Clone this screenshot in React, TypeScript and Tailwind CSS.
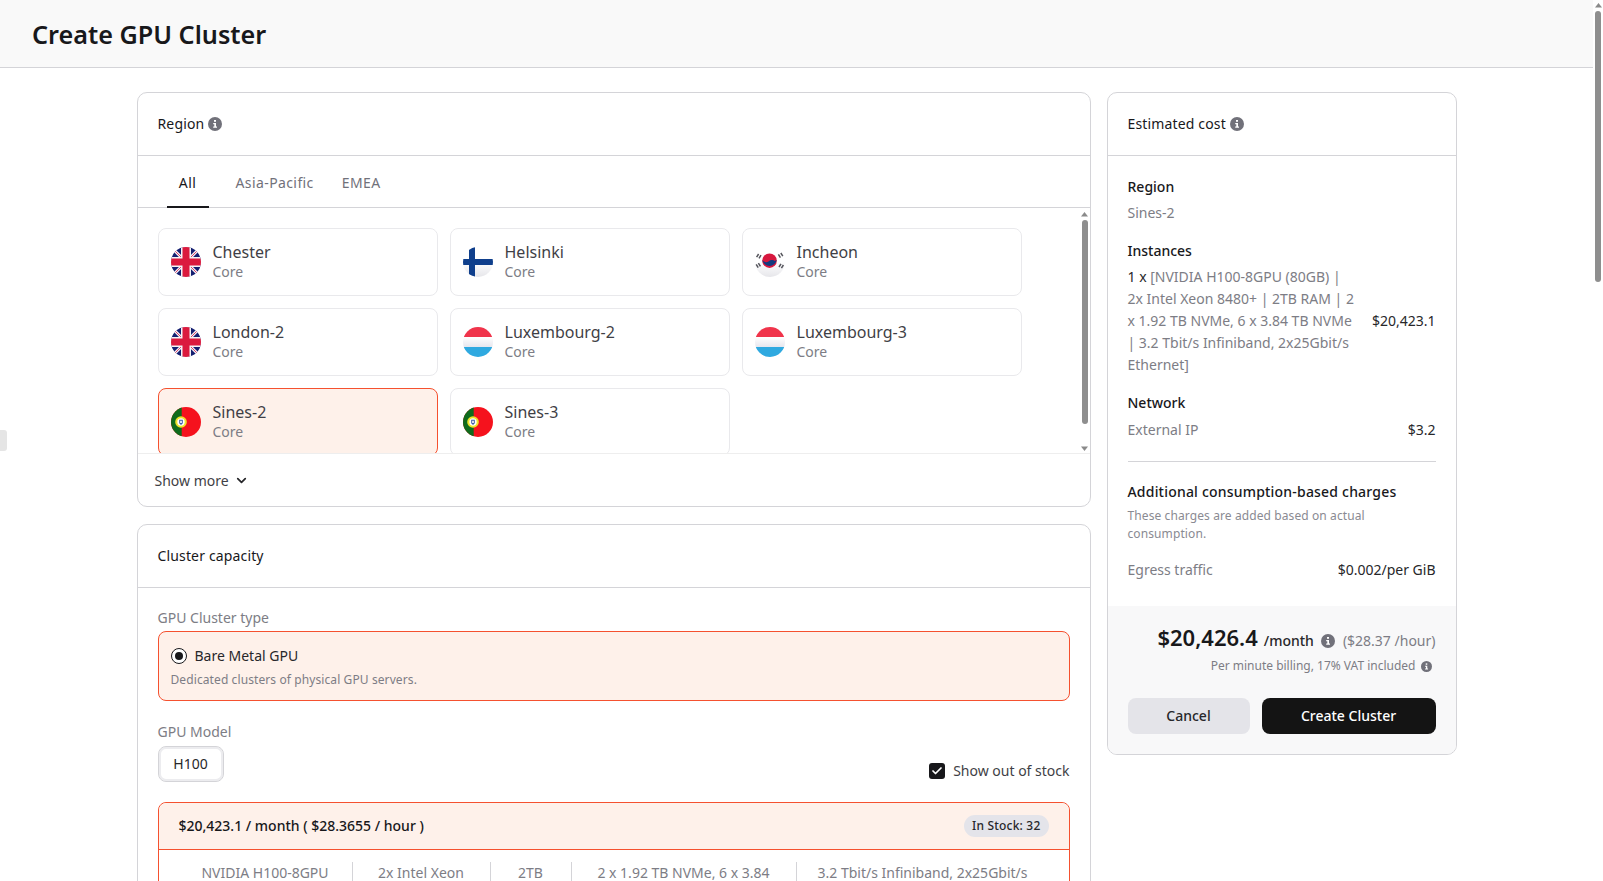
import React from 'react';
import { ChevronDown, Check } from 'lucide-react';

function Info({ size = 14, cls = 'text-[#71717a]' }: { size?: number; cls?: string }) {
  return (
    <svg width={size} height={size} viewBox="0 0 14 14" className={`inline-block shrink-0 ${cls}`}>
      <circle cx="7" cy="7" r="7" fill="currentColor" />
      <rect x="6" y="3" width="2" height="1.8" fill="#fff" />
      <path d="M5.2 6h2.8v3.6h1v1.2H5.2V9.600h1.100V7.200H5.200z" fill="#fff" />
    </svg>
  );
}

function FlagUK() {
  return (
    <svg viewBox="0 0 30 30" className="w-[30px] h-[30px] shrink-0">
      <defs><clipPath id="ukc"><circle cx="15" cy="15" r="15" /></clipPath></defs>
      <g clipPath="url(#ukc)">
        <rect width="30" height="30" fill="#141f70" />
        <path d="M0 0L30 30M30 0L0 30" stroke="#f2f2f6" strokeWidth="3" />
        <path d="M0 0L30 30M30 0L0 30" stroke="#e0416a" strokeWidth="1" />
        <path d="M15 0V30M0 15H30" stroke="#f4f4f6" strokeWidth="10" />
        <path d="M15 0V30M0 15H30" stroke="#db1a3e" strokeWidth="7" />
      </g>
    </svg>
  );
}
function FlagFI() {
  return (
    <svg viewBox="0 0 30 30" className="w-[30px] h-[30px] shrink-0">
      <defs>
        <clipPath id="fic"><circle cx="15" cy="15" r="15" /></clipPath>
        <linearGradient id="fig" x1="0" y1="0" x2="0" y2="1"><stop offset="0.5" stopColor="#fff" /><stop offset="1" stopColor="#e6e6ea" /></linearGradient>
      </defs>
      <g clipPath="url(#fic)">
        <rect width="30" height="30" fill="url(#fig)" />
        <rect x="6" width="6" height="30" fill="#0f3f8c" />
        <rect y="12" width="30" height="6" fill="#0f3f8c" />
      </g>
    </svg>
  );
}
function FlagKR() {
  return (
    <svg viewBox="0 0 30 30" className="w-[30px] h-[30px] shrink-0">
      <defs>
        <clipPath id="krc"><circle cx="15" cy="15" r="15" /></clipPath>
        <linearGradient id="krg" x1="0" y1="0" x2="0" y2="1"><stop offset="0.5" stopColor="#fff" /><stop offset="1" stopColor="#e6e6ea" /></linearGradient>
      </defs>
      <g clipPath="url(#krc)"><rect width="30" height="30" fill="url(#krg)" /></g>
      <circle cx="14.500" cy="13.700" r="7.300" fill="#d7183f" />
      <path d="M7.300 13c1.600 2.200 4.200 2.800 6.200 1.400s4.800-1.900 6.200-.5l2-.9A7.300 7.300 0 0 1 7.300 13z" fill="#123a80" />
      <g stroke="#55555c" strokeWidth="1.500">
        <path d="M1.600 10.200l2-3.200M4 11.400l2-3.200" />
        <path d="M23.400 7.400l2 3.200M25.800 6l2 3.200" />
        <path d="M1.200 17.400l2 3.200M3.400 16.200l2 3.200" />
        <path d="M24 20l2-3.200M26.400 21.200l2-3.200" />
      </g>
    </svg>
  );
}
function FlagLU() {
  return (
    <svg viewBox="0 0 30 30" className="w-[30px] h-[30px] shrink-0">
      <defs>
        <clipPath id="luc"><circle cx="15" cy="15" r="15" /></clipPath>
        <linearGradient id="lug" x1="0" y1="0" x2="0" y2="1"><stop offset="0" stopColor="#fff" /><stop offset="1" stopColor="#e6e6ee" /></linearGradient>
      </defs>
      <g clipPath="url(#luc)">
        <rect width="30" height="10" fill="#f0344b" />
        <rect y="10" width="30" height="10" fill="url(#lug)" />
        <rect y="20" width="30" height="10" fill="#2fa9e0" />
      </g>
    </svg>
  );
}
function FlagPT() {
  return (
    <svg viewBox="0 0 30 30" className="w-[30px] h-[30px] shrink-0">
      <defs><clipPath id="ptc"><circle cx="15" cy="15" r="15" /></clipPath></defs>
      <g clipPath="url(#ptc)">
        <rect width="30" height="30" fill="#f5121d" />
        <rect width="10.700" height="30" fill="#0f6b1c" />
      </g>
      <circle cx="10" cy="15" r="5.800" fill="#f0e32a" />
      <circle cx="10" cy="15" r="3.700" fill="#fff" />
      <path d="M8.200 12.800h3.600v3.400L10 18l-1.800-1.800z" fill="#3a5aa8" />
      <path d="M9.200 13.800h1.600v2.200H9.200z" fill="#fff" />
    </svg>
  );
}

const regions = [
  { name: 'Chester', Flag: FlagUK },
  { name: 'Helsinki', Flag: FlagFI },
  { name: 'Incheon', Flag: FlagKR },
  { name: 'London-2', Flag: FlagUK },
  { name: 'Luxembourg-2', Flag: FlagLU },
  { name: 'Luxembourg-3', Flag: FlagLU },
  { name: 'Sines-2', Flag: FlagPT, selected: true },
  { name: 'Sines-3', Flag: FlagPT },
];

function CardHeader({ title, info }: { title: string; info?: boolean }) {
  return (
    <div className="h-[63px] shrink-0 px-[20px] pb-[2px] flex items-center gap-[4px] border-b border-[#d4d4d8] text-[14px] tracking-[0.15px] font-normal text-[#18181b]">
      {title}
      {info && <span className="mt-[2px] flex"><Info /></span>}
    </div>
  );
}

function Arrow({ up }: { up?: boolean }) {
  return (
    <svg width="7" height="6" viewBox="0 0 7 6" className="shrink-0">
      <path d={up ? 'M3.500 1L7 5.500H0z' : 'M3.500 5L0 .5H7z'} fill="#8a8a8a" />
    </svg>
  );
}

function ScrollBar({ thumb, h }: { thumb: string; h: string }) {
  return (
    <div className={`flex flex-col items-center shrink-0 ${h}`}>
      <Arrow up />
      <div className={`mt-[3px] w-[6px] rounded-full bg-[#8e8e8e] ${thumb}`} />
      <div className="flex-1" />
      <Arrow />
    </div>
  );
}

export default function App() {
  return (
    <div className="relative h-[881px] w-full overflow-hidden bg-white flex font-['Noto_Sans',sans-serif] text-[#18181b]">
      <div className="w-[1593px] shrink-0 flex flex-col">
        <header className="h-[68px] shrink-0 bg-[#f9f9f9] border-b border-[#d4d4d8] flex items-center pl-[32px] pt-[2px]">
          <h1 className="text-[25.2px] leading-none font-semibold text-[#18181b]">Create GPU Cluster</h1>
        </header>
        <main className="w-[1320px] mx-auto pt-[24px] flex gap-[16px] items-start">
          <div className="w-[954px] shrink-0 flex flex-col gap-[17px]">
            <section className="h-[415px] border border-[#d4d4d8] rounded-[10px] bg-white flex flex-col overflow-hidden">
              <CardHeader title="Region" info />
              <div className="h-[52px] shrink-0 border-b border-[#d4d4d8] pl-[29px] flex items-stretch text-[14px] tracking-[0.4px] font-normal">
                <div className="w-[42px] pt-[2px] flex items-center justify-center border-b-2 border-[#18181b] -mb-px text-[#18181b]">All</div>
                <div className="ml-[27px] pt-[2px] flex items-center text-[#71717a]">Asia-Pacific</div>
                <div className="ml-[28px] pt-[2px] flex items-center text-[#71717a]">EMEA</div>
              </div>
              <div className="h-[246px] shrink-0 border-b border-[#eeeeee] flex overflow-hidden">
                <div className="flex-1 pt-[20px] pl-[20px] overflow-hidden">
                  <div className="grid grid-cols-[280px_280px_280px] gap-[12px] w-[864px]">
                    {regions.map(({ name, Flag, selected }) => (
                      <div
                        key={name}
                        className={`h-[68px] rounded-[8px] border flex items-center gap-[12px] pl-[12px] ${selected ? 'border-[#f5512f] bg-[#fef1ea]' : 'border-[#e9e9ec] bg-white'}`}
                      >
                        <Flag />
                        <div className="flex flex-col mb-[1px]">
                          <span className="text-[16px] leading-[20px] text-[#3f3f46]">{name}</span>
                          <span className="text-[14px] leading-[19px] text-[#7d7d85]">Core</span>
                        </div>
                      </div>
                    ))}
                  </div>
                </div>
                <div className="w-[10px] shrink-0 pt-[3px] pb-[1px]">
                  <ScrollBar h="h-full" thumb="h-[204px]" />
                </div>
              </div>
              <div className="flex-1 flex items-center pl-[17px] gap-[5px] text-[14px] text-[#3f3f46]">
                Show more
                <ChevronDown size={15} strokeWidth={2.8} className="text-[#27272a]" />
              </div>
            </section>

            <section className="h-[420px] border border-[#d4d4d8] rounded-t-[10px] bg-white flex flex-col">
              <CardHeader title="Cluster capacity" />
              <div className="px-[20px] pt-[20px] flex flex-col">
                <div className="text-[14px] leading-[19px] text-[#7d7d85]">GPU Cluster type</div>
                <div className="mt-[4px] h-[70px] rounded-[8px] border border-[#f5512f] bg-[#fef1ea] px-[12px] pt-[1px] flex flex-col justify-center">
                  <div className="flex items-center gap-[8px]">
                    <span className="w-[16px] h-[16px] rounded-full border border-[#18181b] bg-white flex items-center justify-center">
                      <span className="w-[8px] h-[8px] rounded-full bg-[#18181b]" />
                    </span>
                    <span className="text-[14px] leading-[20px] text-[#27272a]">Bare Metal GPU</span>
                  </div>
                  <div className="mt-[6px] text-[12px] tracking-[0.1px] leading-[16px] text-[#7d7d85]">Dedicated clusters of physical GPU servers.</div>
                </div>
                <div className="mt-[21px] text-[14px] leading-[19px] text-[#7d7d85]">GPU Model</div>
                <div className="flex items-end justify-between mt-[5px]">
                  <div className="w-[66px] h-[36px] pb-[2px] rounded-[8px] border border-[#d4d4d8] shadow-[inset_0_0_0_2px_#ececef] bg-white flex items-center justify-center text-[14px] text-[#27272a]">H100</div>
                  <label className="mb-[2px] flex items-center gap-[8px] text-[14px] leading-[18px] text-[#3f3f46]">
                    <span className="w-[16px] h-[16px] rounded-[3px] bg-[#18181b] flex items-center justify-center">
                      <Check size={12} strokeWidth={3.5} className="text-white" />
                    </span>
                    Show out of stock
                  </label>
                </div>
                <div className="mt-[20px] rounded-t-[8px] border border-[#f5512f] bg-white">
                  <div className="h-[47px] rounded-t-[8px] bg-[#fef1ea] border-b border-[#f5512f] pl-[20px] pr-[20px] flex items-center justify-between">
                    <span className="text-[14px] leading-[18px] mb-[1px] font-medium text-[#18181b]">$20,423.1 / month ( $28.3655 / hour )</span>
                    <span className="h-[22px] px-[8px] rounded-full bg-[#e4e4ea] flex items-center text-[12px] tracking-[0.2px] font-medium text-[#27272a]">In Stock: 32</span>
                  </div>
                  <div className="flex pl-[20px] pt-[12px] text-[14px] leading-[22px] text-[#7d7d85] text-center">
                    <div className="w-[174px] border-r border-[#d4d4d8] h-[40px]">NVIDIA H100-8GPU</div>
                    <div className="w-[138px] border-r border-[#d4d4d8] h-[40px]">2x Intel Xeon</div>
                    <div className="w-[81px] border-r border-[#d4d4d8] h-[40px]">2TB</div>
                    <div className="w-[225px] border-r border-[#d4d4d8] h-[40px] px-[24px]">2 x 1.92 TB NVMe, 6 x 3.84 TB NVMe</div>
                    <div className="w-[252px] h-[40px]">3.2 Tbit/s Infiniband, 2x25Gbit/s Ethernet</div>
                  </div>
                </div>
              </div>
            </section>
          </div>

          <aside className="w-[350px] shrink-0 border border-[#d4d4d8] rounded-[10px] bg-white overflow-hidden">
            <CardHeader title="Estimated cost" info />
            <div className="px-[20px] pt-[20px] pb-[25px] text-[14px]">
              <div className="leading-[22px] font-medium text-[#18181b]">Region</div>
              <div className="mt-[4px] leading-[22px] text-[#7d7d85]">Sines-2</div>
              <div className="mt-[16px] leading-[22px] font-medium text-[#18181b]">Instances</div>
              <div className="mt-[4px] flex items-center justify-between">
                <div className="w-[228px] leading-[22px] text-[#7d7d85]"><span className="text-[#27272a]">1 x</span> [NVIDIA H100-8GPU (80GB) | 2x Intel Xeon 8480+ | 2TB RAM | 2 x 1.92 TB NVMe, 6 x 3.84 TB NVMe | 3.2 Tbit/s Infiniband, 2x25Gbit/s Ethernet]</div>
                <div className="leading-[22px] text-[#27272a]">$20,423.1</div>
              </div>
              <div className="mt-[16px] leading-[22px] font-medium text-[#18181b]">Network</div>
              <div className="mt-[5px] flex justify-between leading-[22px]">
                <span className="text-[#7d7d85]">External IP</span>
                <span className="text-[#27272a]">$3.2</span>
              </div>
              <div className="mt-[20px] border-t border-[#d4d4d8]" />
              <div className="mt-[19px] leading-[22px] tracking-[0.2px] font-medium text-[#18181b]">Additional consumption-based charges</div>
              <div className="mt-[4px] text-[12px] tracking-[0.1px] leading-[18px] text-[#8a8a92]">These charges are added based on actual consumption.</div>
              <div className="mt-[16px] flex justify-between leading-[22px]">
                <span className="text-[#7d7d85]">Egress traffic</span>
                <span className="text-[#27272a]">$0.002/per GiB</span>
              </div>
            </div>
            <div className="bg-[#f8f8f9] px-[20px] pt-[15px] pb-[20px]">
              <div className="flex items-baseline justify-end">
                <span className="text-[22px] leading-[32px] font-semibold text-[#18181b]">$20,426.4</span>
                <span className="ml-[6px] text-[14px] font-medium text-[#27272a]">/month</span>
                <span className="ml-[7px] self-center mt-[4px]"><Info /></span>
                <span className="ml-[8px] text-[14px] text-[#7d7d85]">($28.37 /hour)</span>
              </div>
              <div className="mt-[4px] pr-[4px] flex items-center justify-end gap-[5px] text-[12px] leading-[18px] text-[#7d7d85]">
                Per minute billing, 17% VAT included
                <Info size={11} />
              </div>
              <div className="mt-[23px] flex gap-[12px]">
                <button className="w-[122px] h-[36px] pb-[1px] rounded-[8px] bg-[#e4e4e9] text-[14px] font-medium text-[#27272a]">Cancel</button>
                <button className="flex-1 h-[36px] pb-[1px] rounded-[8px] bg-[#141414] text-[14px] font-medium text-white">Create Cluster</button>
              </div>
            </div>
          </aside>
        </main>
      </div>
      <div className="w-[10px] shrink-0 pt-[2px] flex flex-col items-center">
        <Arrow up />
        <div className="mt-[3px] w-[6px] h-[271px] rounded-full bg-[#8e8e8e]" />
      </div>
      <div className="absolute left-0 top-[430px] w-[7px] h-[21px] rounded-r-[3px] bg-[#e5e5e5]" />
    </div>
  );
}
